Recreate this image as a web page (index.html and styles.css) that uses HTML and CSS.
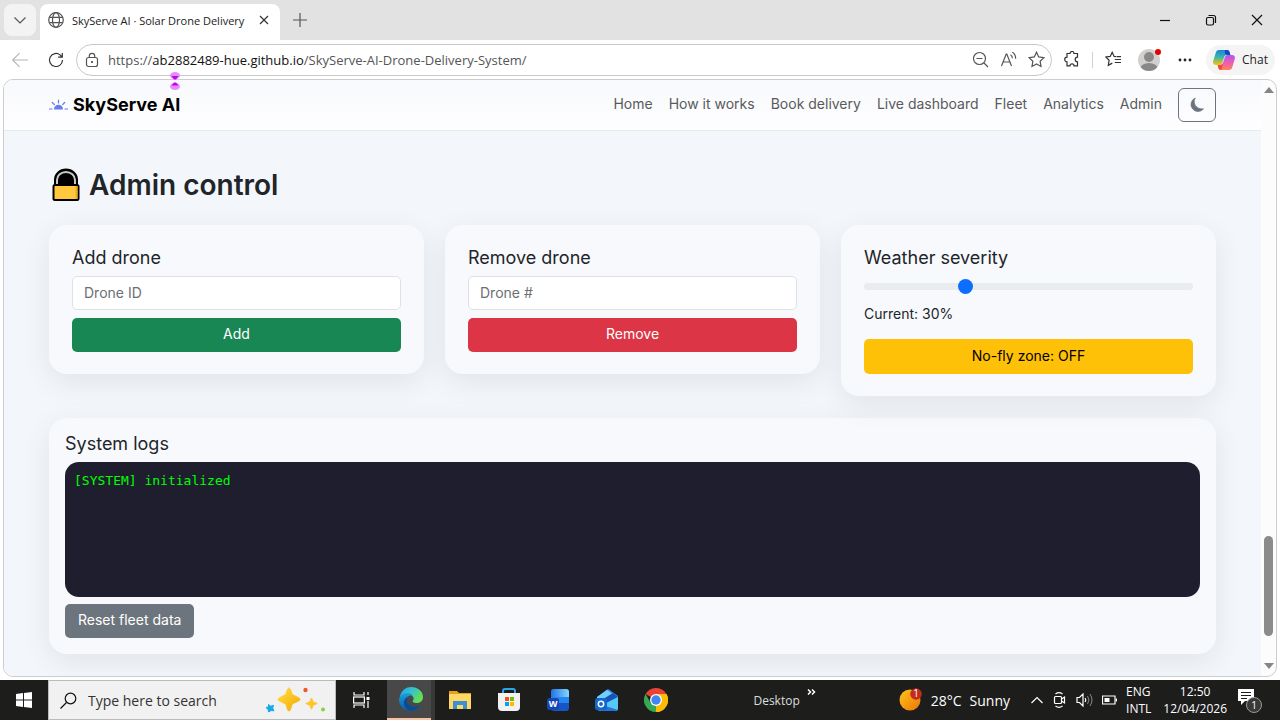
FILE: index.html
```html
<!DOCTYPE html>
<html lang="en">
<head>
<meta charset="utf-8">
<title>SkyServe AI · Solar Drone Delivery</title>
<link rel="stylesheet" href="styles.css">
</head>
<body>
<div class="desktop">
  <header class="tabstrip">
    <button class="tab-menu" aria-label="Tab actions"><svg width="14" height="14" viewBox="0 0 14 14"><path d="M1.5 4.5 7 10l5.500-5.500" class="line"/></svg></button>
    <div class="tab">
      <svg width="16" height="16" viewBox="0 0 16 16"><g class="line"><circle cx="8" cy="8" r="7.300"/><ellipse cx="8" cy="8" rx="3.500" ry="7.300"/><path d="M1.500 5.300h13M1.500 10.700h13"/></g></svg>
      <span class="tab-title">SkyServe AI · Solar Drone Delivery</span>
      <button class="tab-close" aria-label="Close tab"><svg width="10" height="10" viewBox="0 0 10 10"><path d="m1 1 8 8M9 1 1 9" class="line dark"/></svg></button>
    </div>
    <button class="new-tab" aria-label="New tab"><svg width="16" height="16" viewBox="0 0 16 16"><path d="M8 1v14M1 8h14" class="line"/></svg></button>
    <div class="window-buttons">
      <button aria-label="Minimize"><svg width="12" height="12" viewBox="0 0 12 12"><path d="M1 6.500h10" class="line black"/></svg></button>
      <button aria-label="Restore"><svg width="12" height="12" viewBox="0 0 12 12"><g class="line black"><rect x="1.500" y="3.500" width="7" height="7.500" rx="1.500"/><path d="M3.500 1.500H8.500a2 2 0 0 1 2 2V9"/></g></svg></button>
      <button aria-label="Close"><svg width="12" height="12" viewBox="0 0 12 12"><path d="m1 1 10 10M11 1 1 11" class="line black"/></svg></button>
    </div>
  </header>

  <div class="toolbar">
    <button class="nav-btn" aria-label="Back"><svg width="18" height="16" viewBox="0 0 18 16"><path d="M17 8H2M8.500 1.200 1.700 8l6.800 6.800" class="line pale"/></svg></button>
    <button class="nav-btn" aria-label="Refresh"><svg width="16" height="16" viewBox="0 0 16 16"><path d="M14.500 8A6.500 6.500 0 1 1 12.300 3.100L14 5M14.300 1v4.200h-4.200" class="line dark"/></svg></button>
    <div class="address">
      <svg width="14" height="16" viewBox="0 0 14 16"><g class="line"><rect x="1.500" y="5.500" width="11" height="9" rx="2"/><path d="M4.300 5.500V4a2.700 2.700 0 0 1 5.400 0v1.500"/></g><circle cx="7" cy="10" r="1" fill="#333"/></svg>
      <span class="url">https://<b>ab2882489-hue.github.io</b>/SkyServe-AI-Drone-Delivery-System/</span>
      <button aria-label="Zoom out"><svg width="17" height="17" viewBox="0 0 17 17"><g class="line"><circle cx="7.500" cy="7.500" r="6"/><path d="m12 12 4 4M4.500 7.500h6"/></g></svg></button>
      <button aria-label="Read aloud"><svg width="17" height="17" viewBox="0 0 17 17"><path d="m1.500 15 4.700-12h.6l4.700 12M3.200 11h6.600M10.500 3.800c1.400.8 1.900 2 1.900 3.500M12.300 1.300c2.500 1.500 3.500 3.500 3.300 6.500" class="line"/></svg></button>
      <button aria-label="Favorite"><svg width="17" height="17" viewBox="0 0 17 17"><path d="m8.500 1.200 2.200 4.700 5.200.7-3.800 3.600.9 5.200-4.500-2.500L4 15.400l.9-5.200L1.100 6.600l5.200-.7z" class="line"/></svg></button>
    </div>
    <div class="actions">
      <button class="ext" aria-label="Extensions"><svg width="16" height="17" viewBox="0 0 16 17"><path d="M3 2.500h3a2 2 0 0 1 4 0h3.500v3.700a2 2 0 0 0 0 4.600v4H10a2 2 0 0 0-4 0H3v-4a2.200 2.200 0 0 1 0-4.600z" class="line dark"/></svg></button>
      <span class="rule"></span>
      <button class="favs" aria-label="Favorites"><svg width="17" height="17" viewBox="0 0 17 17"><path d="m11.500 5.700-2.400-.3L7.200 1.300 5.200 5.400.8 6l3.300 3.300-.8 5 4-2.200M9.800 8.500H16M9.800 11.500H16M12 5.700h4" class="line dark"/></svg></button>
      <button class="profile" aria-label="Profile"><svg width="26" height="26" viewBox="0 0 26 26"><defs><clipPath id="avatar"><circle cx="12" cy="13" r="11"/></clipPath></defs><circle cx="12" cy="13" r="11" fill="#d2d0ce"/><g clip-path="url(#avatar)" fill="#8a8886"><circle cx="12" cy="10" r="5"/><ellipse cx="12" cy="22" rx="9" ry="6"/></g><circle cx="21" cy="5" r="3" fill="#e50000"/></svg></button>
      <button class="more" aria-label="Settings and more"><svg width="14" height="4" viewBox="0 0 14 4"><g fill="#222"><circle cx="2" cy="2" r="1.400"/><circle cx="7" cy="2" r="1.400"/><circle cx="12" cy="2" r="1.400"/></g></svg></button>
      <button class="chat"><svg width="22" height="20" viewBox="0 0 22 20"><defs><linearGradient id="c1" x1="0" y1="0" x2="0" y2="1"><stop offset="0" stop-color="#1685e4"/><stop offset=".5" stop-color="#42b8a0"/><stop offset="1" stop-color="#ffc500"/></linearGradient><linearGradient id="c2" x1="0" y1="0" x2="0" y2="1"><stop offset="0" stop-color="#a65cf2"/><stop offset=".5" stop-color="#ed5cb3"/><stop offset="1" stop-color="#ff8258"/></linearGradient></defs><path d="M6 0h8q2 0 2.600 2l.7 3h-3.500q-2 0-2.600 2l-2 6q-.7 2-2.700 2H3q-3.500 0-2.800-4L3 2q.7-2 3-2z" fill="url(#c1)"/><path d="M12 0h2q2 0 2.600 2l.8 3h-3q-2 0-2.600-2z" fill="#1748c4"/><path d="M16 20H8q-2 0-2.600-2l-.7-3h2.500q2 0 2.700-2l2-6q.7-2 2.700-2H19q3.500 0 2.800 4L19 18q-.7 2-3 2z" fill="url(#c2)"/><path d="M4.700 15h2.500q2 0 2.700-2l-1 5q-.3 2-1.500 2Q6 20 5.400 18z" fill="#f04c3e"/></svg><span>Chat</span></button>
    </div>
    <svg class="cursor" width="10" height="18" viewBox="0 0 10 18"><ellipse cx="5" cy="3.500" rx="5" ry="3.500" fill="#e58cff"/><ellipse cx="5" cy="14.500" rx="5" ry="3.500" fill="#e58cff"/><path d="M1.500 4h7L6 7.500H4zM4 10.500h2l2.500 3h-7z" fill="#c800f0"/></svg>
  </div>

  <div class="viewport">
    <div class="page">
      <nav class="navbar">
        <a class="brand" href="#"><svg width="19" height="12" viewBox="0 0 19 12"><path d="M5 10.500a4.500 4.800 0 0 1 9 0zM0 9.500h3.500v1H0zM15.500 9.500H19v1h-3.500z" fill="#667eea"/><path d="M9.500 1v3M3.300 3.500l2 2M15.700 3.500l-2 2" stroke="#667eea" stroke-width="1.200" stroke-linecap="round"/></svg><span>SkyServe AI</span></a>
        <div class="links">
          <a href="#">Home</a><a href="#">How it works</a><a href="#">Book delivery</a><a href="#">Live dashboard</a><a href="#">Fleet</a><a href="#">Analytics</a><a href="#">Admin</a>
          <button class="theme" aria-label="Toggle dark mode"><svg width="16" height="16" viewBox="0 0 16 16"><path d="M6.300 1A7 7 0 1 0 14.500 11.800Q14 11.900 13 11.900C8.500 11.900 5 8.500 5.200 4.200Q5.300 2.500 6.300 1z" fill="#6c757d" stroke="#6c757d" stroke-width=".8"/></svg></button>
        </div>
      </nav>
      <main class="content">
        <h1><svg width="28" height="34" viewBox="0 0 28 34"><path d="M3.500 17V11.500a10.500 9.500 0 0 1 21 0v5.500" fill="#000" stroke="#000" stroke-width="3"/><path d="M5 17v-5a9 8 0 0 1 18 0V17" fill="none" stroke="#c8c8c8" stroke-width="2"/><rect x="1.500" y="17" width="25" height="15" rx="1.500" fill="#ffc83d" stroke="#000" stroke-width="2"/><path d="M24.500 18v13" stroke="#f0a91e" stroke-width="2"/></svg><span>Admin control</span></h1>
        <div class="cards">
          <section class="card">
            <h2><label for="add">Add drone</label></h2>
            <input class="field" id="add" type="text" placeholder="Drone ID">
            <button class="btn green">Add</button>
          </section>
          <section class="card">
            <h2><label for="remove">Remove drone</label></h2>
            <input class="field" id="remove" type="text" placeholder="Drone #">
            <button class="btn red">Remove</button>
          </section>
          <section class="card">
            <h2><label for="weather">Weather severity</label></h2>
            <input class="slider" id="weather" type="range" min="0" max="100" value="30">
            <p class="current">Current: 30%</p>
            <button class="btn yellow">No-fly zone: OFF</button>
          </section>
        </div>
        <section class="card logs">
          <h2>System logs</h2>
          <div class="console">[SYSTEM] initialized</div>
          <button class="btn gray">Reset fleet data</button>
        </section>
      </main>
    </div>
    <div class="scrollbar">
      <svg width="10" height="6" viewBox="0 0 10 6"><path d="M0 6 5 0l5 6z"/></svg>
      <div class="track"><div class="thumb"></div></div>
      <svg width="10" height="6" viewBox="0 0 10 6"><path d="m0 0 5 6 5-6z"/></svg>
    </div>
  </div>

  <footer class="taskbar">
    <button class="start" aria-label="Start"><svg width="16" height="16" viewBox="0 0 16 16"><path d="M0 2 7 1v6.500H0zM8 .9 16 0v7.500H8zM0 8.500h7V15l-7-1zM8 8.500h8V16l-8-1z" fill="#fff"/></svg></button>
    <div class="search">
      <svg width="17" height="17" viewBox="0 0 17 17"><g class="line black"><circle cx="10.500" cy="6.500" r="5.300"/><path d="m6.500 10.500-6 6"/></g></svg>
      <input type="text" aria-label="Search" placeholder="Type here to search">
      <svg width="60" height="26" viewBox="0 0 60 26"><defs><linearGradient id="star" x1="0" y1="0" x2="1" y2="1"><stop offset="0" stop-color="#ffdf45"/><stop offset="1" stop-color="#f5a800"/></linearGradient></defs><path d="M24 1c1.500 0 2 3 3.200 6.500C31 9.500 35 11 35 12.500S31 15 27.200 17C26 20.500 25.500 24 24 24s-2-3.500-3.200-7C17 15 13 14 13 12.500S17 9.500 20.800 7.500C22 4 22.500 1 24 1z" fill="url(#star)" stroke="url(#star)"/><path d="m46.500 11 1.700 4 4 1.500-4 1.700-1.700 4-1.700-4-4-1.700 4-1.500z" fill="#ffc52c" stroke="#ffc52c"/><path d="m3.500 17.500 2.300 1.700 2.700-.8-.8 2.700 1.300 2.700-3-.3L3.700 25l-.8-2.700L1 20.500l2.500-.5z" fill="#19a8ed" stroke="#19a8ed"/><circle cx="40.500" cy="3" r="2.200" fill="#f05a28"/><circle cx="58" cy="22.500" r="2" fill="#8bd13f"/></svg>
    </div>
    <button class="taskview" aria-label="Task view"><svg width="17" height="16" viewBox="0 0 17 16"><g stroke="#fff" fill="none" stroke-width="1.200"><path d="M1 0v3h10V0M1 16v-3h10v3M15 0v3M15 9v7"/><rect x=".6" y="5" width="10.800" height="6"/></g><path d="M13.500 5h3v3h-3z" fill="#fff"/></svg></button>
    <div class="apps">
      <button class="app active" aria-label="Edge"><svg width="24" height="24" viewBox="0 0 24 24"><defs><linearGradient id="e1" x1="0" y1="0" x2="1" y2=".5"><stop offset="0" stop-color="#24a5e7"/><stop offset=".5" stop-color="#35c1d0"/><stop offset="1" stop-color="#65df50"/></linearGradient><linearGradient id="e2" x1="0" y1="0" x2="0" y2="1"><stop offset="0" stop-color="#1ba0dc"/><stop offset="1" stop-color="#075aab"/></linearGradient></defs><path d="M1 9C3 3 7 0 12 0c7 0 12 4.500 12 10 0 4-3 6-6.500 6-3 0-4.500-1-3.500-2.500 2-3-1-6-5-6-4 0-7 2-8 5z" fill="url(#e1)"/><path d="M0 13c0-4 4-7 8.500-7 2.500 0 4.500 1 5.500 2.500-4-1-6 1.500-6 4.500 0 5 5 8 13 5.500C19 22 16 24 12 24 5 24 0 19 0 13z" fill="url(#e2)"/><path d="M8 13c0-1.500.5-2.800 1.500-3.700-3 1.500-5 4-4.500 7.500.6 4.200 4 7 8 7 3.500-.4 6-2.300 8-5.300C13 21 8 18 8 13z" fill="#114a8b"/></svg></button>
      <button class="app" aria-label="File Explorer"><svg width="22" height="20" viewBox="0 0 22 20"><path d="M0 1h8l2 2h12v16H0z" fill="#e4a21b"/><path d="M0 4h22v15H0z" fill="#ffd765"/><path d="M4 11h14v8h-4v-4H8v4H4z" fill="#3b8fd6"/></svg></button>
      <button class="app" aria-label="Microsoft Store"><svg width="24" height="24" viewBox="0 0 24 24"><path d="M6 6V3q0-2 2-2h8q2 0 2 2v3" fill="none" stroke="#2ba7e8" stroke-width="2"/><path d="M1 5h22v14q0 4-4 4H5q-4 0-4-4z" fill="#f1f1f1"/><path d="M8 9h4v4H8z" fill="#f25022"/><path d="M13 9h4v4h-4z" fill="#7fba00"/><path d="M8 14h4v4H8z" fill="#00a4ef"/><path d="M13 14h4v4h-4z" fill="#ffb900"/></svg></button>
      <button class="app" aria-label="Word"><svg width="22" height="24" viewBox="0 0 22 24"><defs><linearGradient id="w1"><stop offset="0" stop-color="#2372e3"/><stop offset="1" stop-color="#80d8ff"/></linearGradient></defs><rect x="4" y="1" width="18" height="22" rx="3" fill="#1555c5"/><path d="M4 9V4q0-3 3-3h12q3 0 3 3v5z" fill="url(#w1)"/><path d="M4 9h18v6H4z" fill="#2785f0"/><rect y="10" width="12" height="12" rx="2.500" fill="#1645b5"/><text x="6" y="19" class="letter">W</text></svg></button>
      <button class="app" aria-label="Outlook"><svg width="24" height="24" viewBox="0 0 24 24"><path d="M2 9 12 1.500q1-.7 2 0l9 6.500v12q0 3-3 3H5q-3 0-3-3z" fill="#278be3"/><path d="m2 9 10-7 5 3.500L3 16z" fill="#72cffc"/><path d="m5 13 13-8 5 4-14 9z" fill="#1753b9"/><path d="m7 17 16-8v11q0 3-3 3H7z" fill="#56c8f6"/><path d="m7 17 16 5-3 1H6z" fill="#2572df"/><rect y="10" width="12" height="12" rx="2.500" fill="#1268ca"/><circle cx="6" cy="16" r="2.700" stroke="#fff" stroke-width="1.500" fill="none"/></svg></button>
      <button class="app" aria-label="Chrome"><svg width="24" height="24" viewBox="0 0 24 24"><path d="M12 12 1.600 6A12 12 0 0 1 22.400 6z" fill="#ea4335"/><path d="M12 12V6h10.400A12 12 0 0 1 12 24z" fill="#fbbc05"/><path d="M12 12 12 24A12 12 0 0 1 1.600 6L6.800 15z" fill="#34a853"/><path d="m17.200 15-5.200 9A12 12 0 0 0 22.400 6H12z" fill="#fbbc05"/><circle cx="12" cy="12" r="6" fill="#fff"/><circle cx="12" cy="12" r="4.700" fill="#4285f4"/></svg></button>
    </div>
    <div class="desk"><span>Desktop</span><button class="overflow" aria-label="More desktop items"><svg width="9" height="6" viewBox="0 0 9 6"><path d="m1 .5 2.500 2.500L1 5.500M5 .5 7.500 3 5 5.500" fill="none" stroke="#fff" stroke-width="1.500"/></svg></button></div>
    <div class="weather"><svg width="24" height="24" viewBox="0 0 24 24"><defs><linearGradient id="sun" x1="0" y1="0" x2="1" y2="1"><stop offset="0" stop-color="#ffc51a"/><stop offset="1" stop-color="#e87508"/></linearGradient></defs><circle cx="11" cy="12" r="10.500" fill="url(#sun)"/><circle cx="17" cy="6" r="5.800" fill="#c42b1c"/><text x="17" y="9" class="badge">1</text></svg><span>28°C</span><span>Sunny</span></div>
    <div class="tray">
      <svg width="14" height="8" viewBox="0 0 14 8"><path d="m1.500 7 5.500-5.500L12.500 7" class="line white"/></svg>
      <svg width="14" height="16" viewBox="0 0 14 16"><g class="line white"><rect x="1.500" y="4.500" width="7" height="7" rx="1"/><path d="m8.500 7 3-2v6l-3-2M2.500 2c2-1.500 5-1.500 7 0M2.500 14c2 1.500 5 1.500 7 0"/></g></svg>
      <svg width="17" height="14" viewBox="0 0 17 14"><path d="M1 4.500h2.500L7 1v12L3.500 9.500H1zM9 5q1.500 2 0 4" class="line white"/><path d="M11.500 3q3 4 0 8M14 1q4 6 0 12" fill="none" stroke="#888"/></svg>
      <svg width="15" height="10" viewBox="0 0 15 10"><path d="M.5 1h12.500v8H.500zM14.500 3.500v3" class="line white"/><path d="M2.500 3h5v4h-5z" fill="#fff"/></svg>
      <div class="stack lang"><span>ENG</span><span>INTL</span></div>
      <div class="stack clock"><span>12:50</span><span>12/04/2026</span></div>
      <svg width="26" height="26" viewBox="0 0 26 26"><path d="M1 2h16v12H8l-4 4v-4H1z" fill="#fff"/><path d="M4 5.500h10M4 8.500h10M4 11.500h6" stroke="#1c1c1c"/><circle cx="17" cy="18" r="7.500" fill="#393939" stroke="#999"/><text x="17" y="22" class="badge">1</text></svg>
    </div>
  </footer>
</div>
</body>
</html>
```
FILE: styles.css
```css
* { box-sizing: border-box; }
body { margin: 0; font-family: "Open Sans", "Noto Sans", sans-serif; color: #222; }
button { border: 0; padding: 0; background: none; font: inherit; color: inherit; }
svg { display: block; flex: none; }
a { color: inherit; text-decoration: none; }

.line { fill: none; stroke: #555; stroke-width: 1.2; }
.line.dark { stroke: #333; }
.line.black { stroke: #111; }
.line.pale { stroke: #b8b8b8; }
.line.white { stroke: #fff; }

.desktop { display: flex; flex-direction: column; height: 100vh; background: #fff; }

/* Browser tabs */
.tabstrip { display: flex; align-items: flex-end; height: 40px; background: #e2e2e2; }
.tab-menu { display: grid; place-items: center; width: 32px; height: 32px; margin: 0 4px 4px; border-radius: 8px; background: #f3f3f3; }
.tab { display: flex; align-items: center; width: 240px; height: 36px; padding: 0 9px 4px 8px; border-radius: 8px 8px 0 0; background: #fff; }
.tab-title { flex: 1; margin-left: 8px; font-size: 11px; white-space: nowrap; }
.tab-close { display: grid; place-items: center; width: 14px; height: 20px; }
.new-tab { display: grid; place-items: center; width: 40px; height: 40px; }
.window-buttons { display: flex; margin-left: auto; }
.window-buttons button { display: grid; place-items: center; width: 46px; height: 40px; }

/* Address row */
.toolbar { position: relative; display: flex; align-items: center; height: 39px; flex: none; }
.nav-btn { display: grid; place-items: center; width: 36px; height: 36px; }
.nav-btn:first-child { margin-left: 2px; }
.address { display: flex; flex: 1; align-items: center; height: 32px; margin-left: 2px; padding: 0 1px 0 8px; border: 1px solid #c9c9c9; border-radius: 16px; background: #fff; }
.url { flex: 1; margin-left: 9px; font-size: 13px; color: #555; white-space: nowrap; }
.url b { font-weight: 400; color: #111; }
.address button { display: grid; place-items: center; width: 28px; height: 28px; }
.actions { display: flex; align-items: center; width: 228px; padding-right: 5px; }
.ext { display: grid; place-items: center; width: 40px; }
.rule { width: 1px; height: 16px; background: #d0d0d0; }
.favs { display: grid; place-items: center; width: 40px; }
.profile { margin-left: 4px; }
.more { display: grid; place-items: center; width: 43px; }
.chat { display: flex; align-items: center; justify-content: center; gap: 7px; flex: 1; height: 30px; border-radius: 15px; background: #f4f4f4; font-size: 12px; }
.cursor { position: absolute; left: 170px; top: 32px; z-index: 2; }

/* Web page */
.viewport { display: flex; flex: 1; min-height: 0; margin: 0 3px 3px; overflow: hidden; border: 1px solid #cdcdcd; border-radius: 10px; background: #fcfcfc; }
.page { flex: 1; min-width: 0; overflow: hidden; background: #f3f7fc; font-family: Inter, sans-serif; font-size: 14px; line-height: 20px; color: #212529; }
.navbar { display: flex; align-items: center; justify-content: space-between; height: 51px; padding: 0 45px; border-bottom: 1px solid #e6ebf0; background: linear-gradient(#f8f9fc, #fefeff); }
.brand { display: flex; align-items: center; gap: 5px; font-size: 18px; font-weight: 700; color: #000; }
.links { display: flex; align-items: center; gap: 16px; color: #595a5c; }
.links a { padding-bottom: 2px; }
.theme { display: grid; place-items: center; width: 38px; height: 34px; border: 1px solid #6c757d; border-radius: 6px; }
.content { padding: 36px 45px 22px; }
h1, h2, p { margin: 0; }
h1 { display: flex; align-items: center; gap: 9px; margin-bottom: 22px; padding-left: 3px; font-size: 28px; line-height: 36px; font-weight: 600; }
.cards { display: grid; grid-template-columns: repeat(3, 1fr); align-items: start; gap: 21px; margin-bottom: 22px; }
.card { padding: 22px 23px; border-radius: 18px; background: #f8f9fd; box-shadow: 0 8px 30px rgba(0, 0, 0, 0.08); }
h2 { margin-bottom: 8px; font-size: 18px; line-height: 21px; font-weight: 400; }
.field { display: block; width: 100%; height: 34px; margin-bottom: 8px; padding: 0 11px 2px; border: 1px solid #dee2e6; border-radius: 5px; background: #fff; font: inherit; }
.field::placeholder { color: #6c7075; opacity: 1; }
.btn { display: block; width: 100%; height: 34px; padding-bottom: 2px; border-radius: 5px; color: #fff; }
.green { background: #198754; }
.red { background: #dc3545; }
.yellow { height: 35px; background: #ffc107; color: #000; }
.slider { display: block; width: 100%; height: 21px; margin: 0; appearance: none; background: none; }
.slider::-webkit-slider-runnable-track { height: 7px; border-radius: 7px; background: #e9ecef; }
.slider::-webkit-slider-thumb { width: 15px; height: 15px; margin-top: -4px; appearance: none; border-radius: 50%; background: #0d6efd; }
.current { margin: 6px 0 14px; line-height: 22px; }
.logs { padding: 15px 16px 16px; }
.console { height: 135px; margin-bottom: 7px; padding: 9px; border-radius: 14px; background: #1e1e2e; color: #0f0; font-family: "DejaVu Sans Mono", monospace; font-size: 13px; }
.gray { width: auto; padding: 0 13px 2px; background: #6c757d; }
.scrollbar { display: flex; flex-direction: column; align-items: center; width: 15px; padding: 7px 0; }
.scrollbar path { fill: #858585; }
.track { display: flex; flex: 1; flex-direction: column; justify-content: flex-end; width: 9px; padding-bottom: 27px; }
.thumb { height: 100px; border-radius: 5px; background: #8b8b8b; }

/* Windows taskbar */
.taskbar { display: flex; align-items: center; height: 40px; flex: none; background: #1d1d1c; color: #fff; }
.start { display: grid; place-items: center; width: 48px; height: 40px; }
.search { display: flex; align-items: center; width: 288px; height: 40px; padding: 0 10px 0 11px; border: 1px solid #bbb; background: #f1f1f1; }
.search input { flex: 1; min-width: 0; padding: 0 0 0 11px; border: 0; background: none; font: inherit; font-size: 14px; }
.search input::placeholder { color: #333; opacity: 1; }
.taskview { display: grid; place-items: center; width: 51px; height: 40px; }
.apps { display: flex; gap: 5px; }
.app { display: grid; place-items: center; width: 44px; height: 40px; padding-left: 4px; }
.app.active { border-bottom: 2px solid #f8c3a5; background: #484848; box-shadow: 4px 0 #383838; }
.letter { fill: #fff; font-size: 9px; font-weight: 700; text-anchor: middle; }
.badge { fill: #fff; font-size: 10px; text-anchor: middle; }
.desk { display: flex; gap: 7px; margin-left: auto; font-size: 12px; color: #ddd; }
.overflow { align-self: flex-start; margin-top: -3px; }
.weather { display: flex; align-items: center; gap: 8px; margin-left: 83px; font-size: 14px; }
.tray { display: flex; align-items: center; gap: 9px; margin-left: 20px; padding-right: 17px; }
.stack { display: flex; flex-direction: column; font-size: 12px; line-height: 17px; }
.clock { align-items: center; margin: 0 1px 0 3px; }
```
